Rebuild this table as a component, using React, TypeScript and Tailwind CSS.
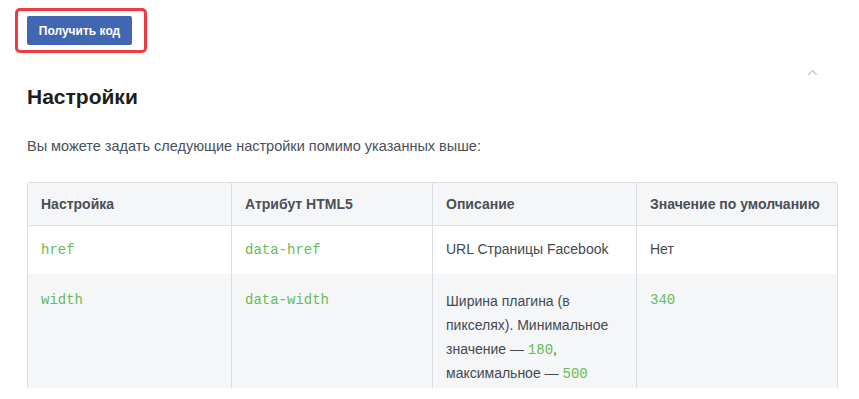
import { ChevronUp } from "lucide-react";

const code = "font-['Liberation_Mono',monospace] text-[#66bd58]";
const inlineCode = "font-['Liberation_Mono',monospace] leading-none text-[#66bd58]";

function Cell({ children, className = "" }: { children: React.ReactNode; className?: string }) {
  return (
    <div className={`border-r border-[#dadde1] px-[13px] last:border-r-0 ${className}`}>
      {children}
    </div>
  );
}

export default function App() {
  return (
    <div className="relative h-[399px] w-[859px] overflow-hidden bg-white font-['Liberation_Sans',Arial,sans-serif] text-[#444950]">
      {/* highlighted button */}
      <div className="pl-[15px] pt-[8px]">
        <div className="inline-block rounded-[5px] border-[3px] border-[#ee3a41] pb-[5px] pl-[9px] pr-[12px] pt-[5px]">
          <button className="flex h-[29px] w-[105px] items-center justify-center rounded-[2px] bg-[#4267b2] text-[12px] font-bold text-white">
            Получить код
          </button>
        </div>
      </div>

      <ChevronUp
        className="absolute left-[805px] top-[65px] h-[15px] w-[15px] text-[#bec3c9]"
        strokeWidth={2.25}
      />

      <div className="pl-[27px] pr-[21px]">
        <h2 className="mt-[30px] text-[21px] font-bold leading-[28px] text-[#1c1e21]">
          Настройки
        </h2>
        <p className="mt-[25px] text-[14.5px] leading-[20px] text-[#4b4f56]">
          Вы можете задать следующие настройки помимо указанных выше:
        </p>

        <div className="mt-[26px] h-[206px] overflow-hidden rounded-t-[3px] border-x border-t border-[#dadde1] text-[14px]">
          <div className="grid grid-cols-[204px_201px_204px_1fr] border-b border-[#dadde1] bg-[#f5f6f7] font-bold leading-[18px] text-[#4b4f56]">
            <Cell className="py-[12px]">Настройка</Cell>
            <Cell className="py-[12px]">Атрибут HTML5</Cell>
            <Cell className="py-[12px]">Описание</Cell>
            <Cell className="py-[12px]">Значение по умолчанию</Cell>
          </div>
          <div className="grid grid-cols-[204px_201px_204px_1fr] leading-[24px]">
            <Cell className="pb-[12px] pt-[11px]">
              <span className={code}>href</span>
            </Cell>
            <Cell className="pb-[12px] pt-[11px]">
              <span className={code}>data-href</span>
            </Cell>
            <Cell className="pb-[12px] pt-[11px]">URL Страницы Facebook</Cell>
            <Cell className="pb-[12px] pt-[11px]">Нет</Cell>
          </div>
          <div className="grid grid-cols-[204px_201px_204px_1fr] bg-[#f5f6f7] leading-[24px]">
            <Cell className="pb-[12px] pt-[13px]">
              <span className={code}>width</span>
            </Cell>
            <Cell className="pb-[12px] pt-[13px]">
              <span className={code}>data-width</span>
            </Cell>
            <Cell className="pb-[12px] pt-[15px]">
              Ширина плагина (в пикселях). Минимальное значение —{" "}
              <span className={inlineCode}>180</span>, максимальное —{" "}
              <span className={inlineCode}>500</span>
            </Cell>
            <Cell className="pb-[12px] pt-[13px]">
              <span className={code}>340</span>
            </Cell>
          </div>
        </div>
      </div>
    </div>
  );
}
